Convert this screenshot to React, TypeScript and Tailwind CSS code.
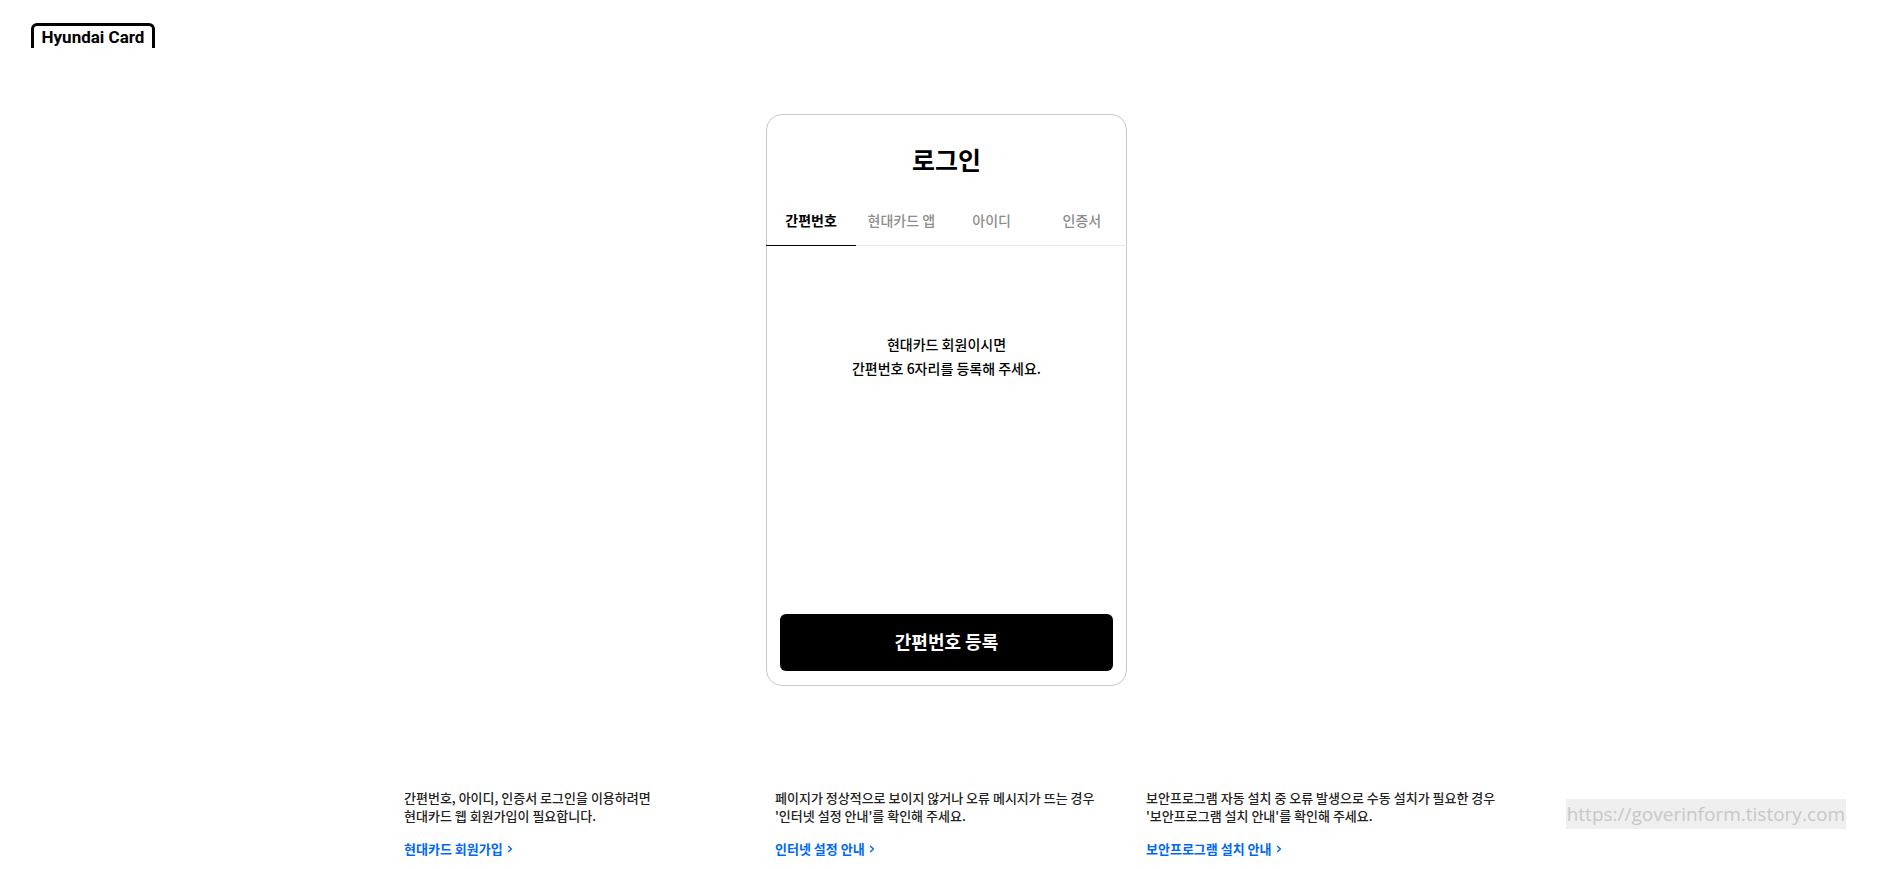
import clsx from "clsx";

const tabs = ["간편번호", "현대카드 앱", "아이디", "인증서"];

const guides = [
  {
    lines: ["간편번호, 아이디, 인증서 로그인을 이용하려면", "현대카드 웹 회원가입이 필요합니다."],
    link: "현대카드 회원가입",
  },
  {
    lines: ["페이지가 정상적으로 보이지 않거나 오류 메시지가 뜨는 경우", "'인터넷 설정 안내'를 확인해 주세요."],
    link: "인터넷 설정 안내",
  },
  {
    lines: ["보안프로그램 자동 설치 중 오류 발생으로 수동 설치가 필요한 경우", "'보안프로그램 설치 안내'를 확인해 주세요."],
    link: "보안프로그램 설치 안내",
  },
];

function Logo() {
  return (
    <a
      href="#"
      className="flex h-[25px] w-31 items-center justify-center rounded-t-md border-3 border-b-0 border-black pt-[2px] font-[Roboto,sans-serif] text-[17px] font-bold whitespace-nowrap text-black"
    >
      Hyundai Card
    </a>
  );
}

function LoginCard() {
  return (
    <section className="flex min-h-143 w-full max-w-[361px] flex-col rounded-2xl border border-[#c8c8c8]">
      <h1 className="pt-[26px] text-center text-[25px] leading-9 font-bold">로그인</h1>
      <div role="tablist" className="-mx-px mt-[18px] grid grid-cols-4">
        {tabs.map((tab, i) => (
          <button
            key={tab}
            type="button"
            role="tab"
            aria-selected={i === 0}
            className={clsx(
              "h-[51px] border-b text-sm whitespace-nowrap",
              i === 0 ? "border-black font-bold text-black" : "border-[#e8e8e8] font-medium text-[#8c8c8c]"
            )}
          >
            {tab}
          </button>
        ))}
      </div>
      <p className="mt-[86px] text-center text-sm leading-6 font-medium">
        현대카드 회원이시면
        <br />
        간편번호 6자리를 등록해 주세요.
      </p>
      <div className="mt-auto px-[13px] pb-[14px]">
        <button type="button" className="h-[57px] w-full rounded-md bg-black pb-[3px] text-lg font-bold text-white">
          간편번호 등록
        </button>
      </div>
    </section>
  );
}

function Chevron() {
  return (
    <svg width="6" height="8" viewBox="0 0 6 8" fill="none" stroke="currentColor" strokeWidth="1.4" aria-hidden="true">
      <path d="M1.2 1 L4.4 4 L1.2 7" />
    </svg>
  );
}

export default function App() {
  return (
    <div className="relative flex min-h-screen flex-col bg-white font-['Noto_Sans_CJK_KR',sans-serif] text-black">
      <header className="px-[31px] pt-[23px]">
        <Logo />
      </header>
      <main className="flex justify-center pt-[66px] pl-[7px]">
        <LoginCard />
      </main>
      <footer className="flex justify-center pt-[103px] pb-[9px] pl-[7px]">
        <div className="grid w-full max-w-[1085px] grid-cols-3 gap-7">
          {guides.map((guide) => (
            <div key={guide.link} className="text-[13px] leading-[18px] whitespace-nowrap">
              <p className="font-medium text-[#222]">
                {guide.lines[0]}
                <br />
                {guide.lines[1]}
              </p>
              <a href="#" className="mt-[15px] inline-flex items-center gap-1 font-bold text-[#0068f0]">
                {guide.link}
                <Chevron />
              </a>
            </div>
          ))}
        </div>
      </footer>
      <p className="absolute right-10 bottom-10 bg-[#efefef] px-px font-['Open_Sans',sans-serif] text-[19px] leading-[30px] text-[#c8c8c8]">
        https://goverinform.tistory.com
      </p>
    </div>
  );
}
